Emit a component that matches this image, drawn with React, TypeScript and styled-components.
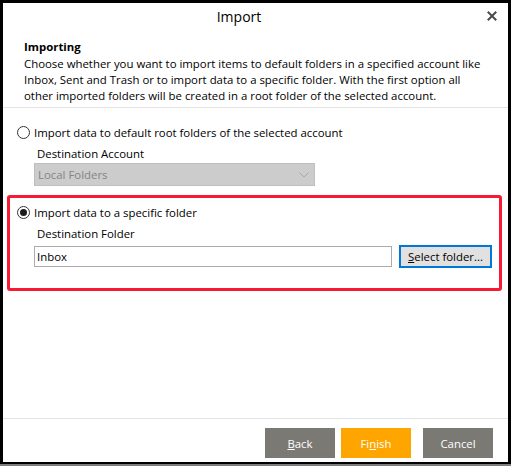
import React from "react";
import styled, { createGlobalStyle } from "styled-components";

const GlobalStyle = createGlobalStyle`
  html, body {
    margin: 0;
    padding: 0;
    width: 511px;
    height: 466px;
    overflow: hidden;
    background: #000;
  }
  * { box-sizing: border-box; }
  body {
    font-family: "Open Sans", "Noto Sans", sans-serif;
    color: #000;
  }
`;

const Frame = styled.div`
  width: 511px;
  height: 466px;
  background: #000;
  padding: 3px 3px 0 3px;
  display: flex;
  flex-direction: column;
`;

const BottomStrip = styled.div`
  margin-top: 2px;
  height: 2px;
  margin-left: -3px;
  margin-right: -3px;
  background: #7d7d7d;
`;

const Dialog = styled.div`
  width: 505px;
  height: 459px;
  background: #fff;
  display: flex;
  flex-direction: column;
`;

const TitleBar = styled.div`
  display: flex;
  height: 27px;
  align-items: stretch;
`;

const Title = styled.div`
  flex: 1;
  text-align: center;
  font-size: 14px;
  line-height: 27px;
  color: #000;
`;

const CloseButton = styled.div`
  width: 33px;
  display: flex;
  align-items: center;
  justify-content: center;
  padding-bottom: 1px;
`;

const Header = styled.div`
  padding: 9px 12px 3px 21px;
  border-bottom: 1px solid #e4e4e4;
`;

const Heading = styled.div`
  font-weight: 700;
  font-size: 11.4px;
  line-height: 16px;
  margin-bottom: 1px;
`;

const Description = styled.div`
  font-size: 11.4px;
  line-height: 16px;
  white-space: nowrap;
`;

const Content = styled.div`
  flex: 1;
  padding: 16px 6px 0 4px;
  display: flex;
  flex-direction: column;
`;

const OptionBlock = styled.div<{ $highlight?: boolean }>`
  display: flex;
  flex-direction: column;
  border: 3px solid ${(p) => (p.$highlight ? "#f61a33" : "transparent")};
  border-radius: 3px;
  padding: ${(p) => (p.$highlight ? "6px 7px 20px 7px" : "0 7px 0 7px")};
  margin-top: ${(p) => (p.$highlight ? "6px" : "-3px")};
`;

const RadioRow = styled.label`
  display: flex;
  align-items: center;
  height: 16px;
  font-size: 11.4px;
  gap: 4px;
`;

const RadioCircle = styled.span<{ $checked?: boolean }>`
  width: 13px;
  height: 13px;
  border-radius: 50%;
  border: 1px solid #333;
  background: #fff;
  display: flex;
  align-items: center;
  justify-content: center;
  &::after {
    content: "";
    width: 7px;
    height: 7px;
    border-radius: 50%;
    background: ${(p) => (p.$checked ? "#1c1c1c" : "transparent")};
  }
`;

const FieldLabel = styled.div`
  font-size: 11.4px;
  line-height: 16px;
  margin: 6px 0 1px 20px;
`;

const ComboBox = styled.div`
  margin-left: 17px;
  width: 281px;
  height: 23px;
  background: #cccccc;
  border: 1px solid #bfbfbf;
  display: flex;
  align-items: center;
  justify-content: space-between;
  padding: 0 5px 0 3px;
  font-size: 11.4px;
  color: #858585;
`;

const FieldRow = styled.div`
  margin-left: 17px;
  margin-top: 2px;
  display: flex;
  align-items: center;
  gap: 7px;
  height: 23px;
`;

const TextInput = styled.div`
  width: 358px;
  height: 21px;
  border: 1px solid #ababab;
  background: #fff;
  font-size: 11.4px;
  line-height: 19px;
  padding-left: 2px;
`;

const PickerButton = styled.div`
  width: 93px;
  height: 23px;
  border: 2px solid #0078d7;
  background: #e1e1e1;
  font-size: 11.4px;
  display: flex;
  align-items: center;
  justify-content: center;
  line-height: 19px;
`;

const Footer = styled.div`
  border-top: 1px solid #e4e4e4;
  display: flex;
  justify-content: flex-end;
  padding: 9px 15px 4px 0;
`;

const ActionButton = styled.div<{ $variant: "gray" | "orange"; $spaceAfter: number }>`
  width: 70px;
  height: 30px;
  margin-right: ${(p) => p.$spaceAfter}px;
  background: ${(p) => (p.$variant === "orange" ? "#ffa500" : "#7b7974")};
  color: #fff;
  font-size: 11.4px;
  display: flex;
  align-items: center;
  justify-content: center;
`;

const CloseIcon = () => (
  <svg width="10" height="10" viewBox="0 0 10 10">
    <path d="M1.5 1.5 L8.5 8.5 M8.5 1.5 L1.5 8.5" stroke="#4a4a4a" strokeWidth="2" strokeLinecap="square" />
  </svg>
);

const Chevron = () => (
  <svg width="10" height="6" viewBox="0 0 10 6">
    <path d="M0.5 0.5 L5 5 L9.5 0.5" stroke="#a9a9a9" strokeWidth="1" fill="none" />
  </svg>
);

export default function App() {
  return (
    <>
      <GlobalStyle />
      <Frame>
        <Dialog>
          <TitleBar>
            <Title>Import</Title>
            <CloseButton>
              <CloseIcon />
            </CloseButton>
          </TitleBar>
          <Header>
            <Heading>Importing</Heading>
            <Description>
              Choose whether you want to import items to default folders in a specified account like
              <br />
              Inbox, Sent and Trash or to import data to a specific folder. With the first option all
              <br />
              other imported folders will be created in a root folder of the selected account.
            </Description>
          </Header>
          <Content>
            <OptionBlock>
              <RadioRow>
                <RadioCircle />
                Import data to default root folders of the selected account
              </RadioRow>
              <FieldLabel>Destination Account</FieldLabel>
              <ComboBox>
                <span>Local Folders</span>
                <Chevron />
              </ComboBox>
            </OptionBlock>
            <OptionBlock $highlight>
              <RadioRow>
                <RadioCircle $checked />
                Import data to a specific folder
              </RadioRow>
              <FieldLabel>Destination Folder</FieldLabel>
              <FieldRow>
                <TextInput>Inbox</TextInput>
                <PickerButton>
                  <span>
                    <u>S</u>elect folder...
                  </span>
                </PickerButton>
              </FieldRow>
            </OptionBlock>
          </Content>
          <Footer>
            <ActionButton $variant="gray" $spaceAfter={6}>
              <span>
                <u>B</u>ack
              </span>
            </ActionButton>
            <ActionButton $variant="orange" $spaceAfter={12}>
              <span>
                Fi<u>n</u>ish
              </span>
            </ActionButton>
            <ActionButton $variant="gray" $spaceAfter={0}>
              Cancel
            </ActionButton>
          </Footer>
        </Dialog>
        <BottomStrip />
      </Frame>
    </>
  );
}
